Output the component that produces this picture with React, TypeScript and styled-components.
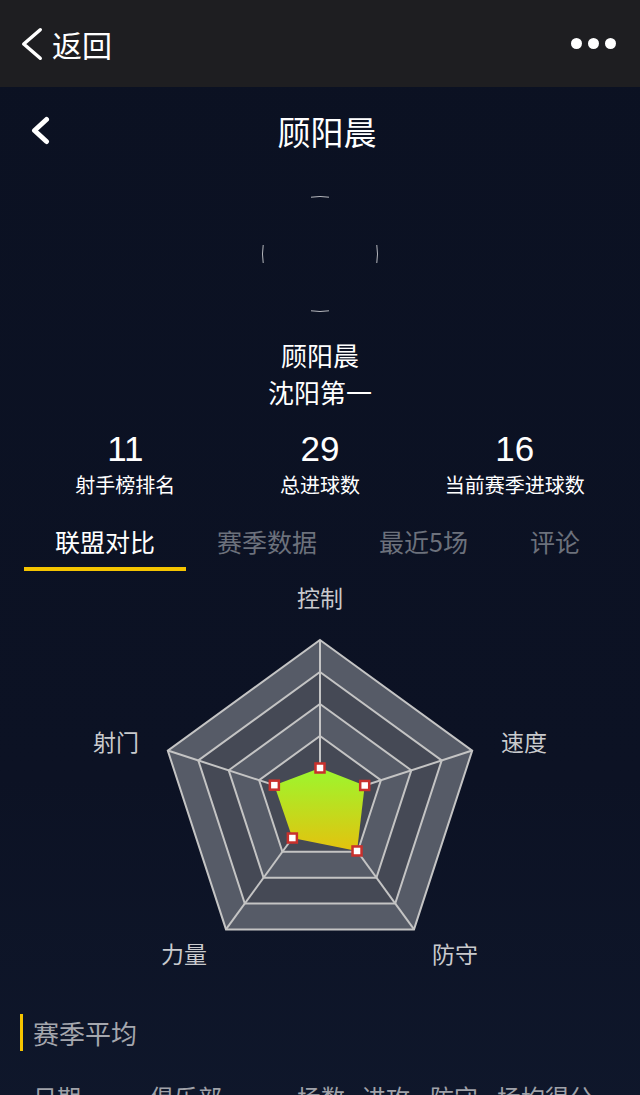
import React from "react";
import styled, { createGlobalStyle } from "styled-components";

const GlobalStyle = createGlobalStyle`
  html, body {
    margin: 0;
    padding: 0;
    background: #0c1224;
  }
  body {
    font-family: "Noto Sans CJK SC", "Noto Sans", sans-serif;
    color: #ffffff;
  }
  * { box-sizing: border-box; }
`;

const Page = styled.div`
  width: 640px;
  min-height: 1095px;
  background: linear-gradient(180deg, #0b1122 0%, #0c1224 70%, #0f172b 100%);
  overflow: hidden;
`;

const TopBar = styled.div`
  height: 87px;
  background: #1e1e21;
  display: flex;
  align-items: center;
  justify-content: space-between;
  padding: 0 24px 0 21px;
`;

const BackLink = styled.div`
  display: flex;
  align-items: center;
  gap: 9px;
  font-size: 30px;
  line-height: 40px;
  color: #ffffff;
`;

const Dots = styled.div`
  display: flex;
  gap: 6px;
`;

const Dot = styled.span`
  width: 11px;
  height: 11px;
  border-radius: 50%;
  background: #ffffff;
`;

const Header = styled.div`
  height: 88px;
  display: flex;
  align-items: center;
  justify-content: center;
  padding-left: 14px;
  position: relative;
`;

const HeaderBack = styled.div`
  position: absolute;
  left: 31px;
  top: 29px;
  display: flex;
`;

const Title = styled.h1`
  margin: 0;
  font-size: 33px;
  font-weight: 400;
  line-height: 44px;
  color: #ffffff;
`;

const Profile = styled.div`
  display: flex;
  flex-direction: column;
  align-items: center;
  padding-top: 21px;
`;

const Avatar = styled.div`
  width: 116px;
  height: 116px;
  display: flex;
`;

const NameBlock = styled.div`
  margin-top: 24px;
  display: flex;
  flex-direction: column;
  align-items: center;
  font-size: 26px;
  line-height: 37px;
  color: #ffffff;
`;

const Stats = styled.div`
  display: grid;
  grid-template-columns: repeat(3, 1fr);
  padding: 0 28px;
  margin-top: 19px;
`;

const Stat = styled.div`
  display: flex;
  flex-direction: column;
  align-items: center;
`;

const StatValue = styled.div`
  font-family: "Liberation Sans", Arial, sans-serif;
  font-size: 35px;
  line-height: 40px;
  color: #ffffff;
`;

const StatLabel = styled.div`
  font-size: 20px;
  line-height: 32px;
  color: #ffffff;
`;

const Tabs = styled.div`
  display: flex;
  padding-left: 24px;
  margin-top: 22px;
`;

const Tab = styled.div<{ $active?: boolean }>`
  padding: 0 31px 8px;
  font-size: 25px;
  line-height: 36px;
  color: ${(p) => (p.$active ? "#ffffff" : "#6c717c")};
  border-bottom: 4px solid ${(p) => (p.$active ? "#f5c400" : "transparent")};
  white-space: nowrap;
`;

const ChartWrap = styled.div`
  display: flex;
  justify-content: center;
`;

const SectionTitle = styled.div`
  margin: 33px 0 0 20px;
  padding-left: 10px;
  border-left: 3px solid #f5c400;
  font-size: 26px;
  line-height: 37px;
  color: #a5a7ae;
`;

const TableHead = styled.div`
  display: grid;
  grid-template-columns: 117px 147px 65px 68px 67px auto;
  padding-left: 33px;
  margin-top: 30px;
  font-size: 24px;
  line-height: 32px;
  color: #a0a2a9;
  white-space: nowrap;
`;

const ChevronIcon = ({ w, h, sw }: { w: number; h: number; sw: number }) => (
  <svg width={w} height={h} viewBox={`0 0 ${w} ${h}`}>
    <polyline
      points={`${w - sw / 2 - 1},${sw / 2 + 1} ${sw / 2 + 1},${h / 2} ${w - sw / 2 - 1},${h - sw / 2 - 1}`}
      fill="none"
      stroke="#ffffff"
      strokeWidth={sw}
      strokeLinecap="round"
      strokeLinejoin="round"
    />
  </svg>
);

const AvatarRing = () => {
  const c = 58;
  const r = 57.5;
  const arc = (deg: number, span: number) => {
    const a1 = ((deg - span) * Math.PI) / 180;
    const a2 = ((deg + span) * Math.PI) / 180;
    return `M ${c + r * Math.cos(a1)} ${c + r * Math.sin(a1)} A ${r} ${r} 0 0 1 ${c + r * Math.cos(a2)} ${c + r * Math.sin(a2)}`;
  };
  return (
    <svg width="116" height="116" viewBox="0 0 116 116">
      {[0, 90, 180, 270].map((d) => (
        <path key={d} d={arc(d, 9)} fill="none" stroke="rgba(255,255,255,0.7)" strokeWidth="1" />
      ))}
    </svg>
  );
};

const CX = 320;
const CY = 229;
const pt = (i: number, r: number) => {
  const a = ((-90 + 72 * i) * Math.PI) / 180;
  return [CX + r * Math.cos(a), CY + r * Math.sin(a)];
};
const poly = (r: number) =>
  [0, 1, 2, 3, 4].map((i) => pt(i, r).map((v) => v.toFixed(1)).join(",")).join(" ");

const labels = [
  { t: "控制", x: 320, y: 26 },
  { t: "速度", x: 524, y: 170 },
  { t: "防守", x: 455, y: 382 },
  { t: "力量", x: 184, y: 382 },
  { t: "射门", x: 116, y: 170 },
];

const values = [32, 47, 63, 47, 48];

const Radar = () => {
  const rings = [160, 128, 96, 64, 32];
  const dataPts = values.map((v, i) => pt(i, v));
  return (
    <svg width="640" height="410" viewBox="0 0 640 410">
      <defs>
        <linearGradient id="dataFill" x1="0" y1="0" x2="0" y2="1">
          <stop offset="0%" stopColor="#9bf72e" />
          <stop offset="100%" stopColor="#e4c20e" />
        </linearGradient>
      </defs>
      {rings.map((r, k) => (
        <polygon
          key={r}
          points={poly(r)}
          fill={k % 2 === 0 ? "#565b67" : "#454955"}
          stroke="#c4c4c4"
          strokeWidth="2"
        />
      ))}
      {[0, 1, 2, 3, 4].map((i) => {
        const [x, y] = pt(i, 160);
        return <line key={i} x1={CX} y1={CY} x2={x} y2={y} stroke="#c4c4c4" strokeWidth="2" />;
      })}
      <polygon points={dataPts.map((p) => p.join(",")).join(" ")} fill="url(#dataFill)" />
      {dataPts.map(([x, y], i) => (
        <rect
          key={i}
          x={x - 4.5}
          y={y - 4.5}
          width="9"
          height="9"
          fill="#ffffff"
          stroke="#c9302c"
          strokeWidth="2.5"
        />
      ))}
      {labels.map((l) => (
        <text
          key={l.t}
          x={l.x}
          y={l.y}
          textAnchor="middle"
          dominantBaseline="central"
          fontSize="23"
          fill="#c9cacd"
          fontFamily='"Noto Sans CJK SC", sans-serif'
        >
          {l.t}
        </text>
      ))}
    </svg>
  );
};

export default function App() {
  return (
    <Page>
      <GlobalStyle />
      <TopBar>
        <BackLink>
          <ChevronIcon w={22} h={34} sw={3.5} />
          <span>返回</span>
        </BackLink>
        <Dots>
          <Dot />
          <Dot />
          <Dot />
        </Dots>
      </TopBar>
      <Header>
        <HeaderBack>
          <ChevronIcon w={19} h={29} sw={5} />
        </HeaderBack>
        <Title>顾阳晨</Title>
      </Header>
      <Profile>
        <Avatar>
          <AvatarRing />
        </Avatar>
        <NameBlock>
          <span>顾阳晨</span>
          <span>沈阳第一</span>
        </NameBlock>
      </Profile>
      <Stats>
        <Stat>
          <StatValue>11</StatValue>
          <StatLabel>射手榜排名</StatLabel>
        </Stat>
        <Stat>
          <StatValue>29</StatValue>
          <StatLabel>总进球数</StatLabel>
        </Stat>
        <Stat>
          <StatValue>16</StatValue>
          <StatLabel>当前赛季进球数</StatLabel>
        </Stat>
      </Stats>
      <Tabs>
        <Tab $active>联盟对比</Tab>
        <Tab>赛季数据</Tab>
        <Tab>最近5场</Tab>
        <Tab>评论</Tab>
      </Tabs>
      <ChartWrap>
        <Radar />
      </ChartWrap>
      <SectionTitle>赛季平均</SectionTitle>
      <TableHead>
        <span>日期</span>
        <span>俱乐部</span>
        <span>场数</span>
        <span>进攻</span>
        <span>防守</span>
        <span>场均得分</span>
      </TableHead>
    </Page>
  );
}
